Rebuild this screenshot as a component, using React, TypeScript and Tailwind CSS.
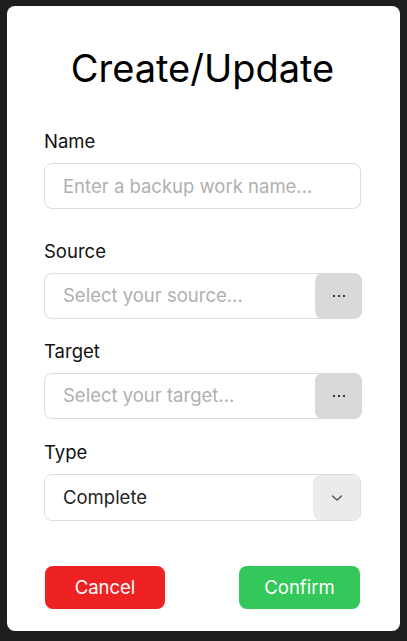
import { useState } from 'react'

function Dots() {
  return (
    <svg width="14" height="4" viewBox="0 0 14 4" fill="#111">
      <circle cx="2" cy="2" r="1.1" />
      <circle cx="7" cy="2" r="1.1" />
      <circle cx="12" cy="2" r="1.1" />
    </svg>
  )
}

function PickerField({ placeholder }: { placeholder: string }) {
  return (
    <div className="flex h-[46px] items-stretch rounded-lg border border-[#dcdcdc] bg-white">
      <input
        className="min-w-0 flex-1 bg-transparent pl-[18px] text-[18.5px] text-[#222] placeholder:text-[#b0b0b0] outline-none"
        placeholder={placeholder}
      />
      <button className="-my-px -mr-[2px] flex w-[47px] items-center justify-center rounded-lg bg-[#d9d9d9]">
        <Dots />
      </button>
    </div>
  )
}

export default function App() {
  const [type, setType] = useState('Complete')

  return (
    <div className="h-[641px] bg-[#1e1e1e] pl-[7px] pt-[6px]" style={{ fontFamily: 'Inter, "Noto Sans", sans-serif' }}>
      <div className="flex h-[625px] w-[393px] flex-col rounded-lg bg-white pl-[37px] pr-[39px] pt-[42px]">
        <h1 className="text-center text-[38px] leading-[40px] text-black">Create/Update</h1>

        {/* Name */}
        <label className="mt-[39px] mb-2 text-[18.5px] leading-7 text-[#111]">Name</label>
        <input
          className="h-[46px] rounded-lg border border-[#dcdcdc] pl-[18px] text-[18.5px] text-[#222] placeholder:text-[#b0b0b0] outline-none"
          placeholder="Enter a backup work name..."
        />

        {/* Source */}
        <label className="mt-[28px] mb-2 text-[18.5px] leading-7 text-[#111]">Source</label>
        <PickerField placeholder="Select your source..." />

        {/* Target */}
        <label className="mt-[18px] mb-2 text-[18.5px] leading-7 text-[#111]">Target</label>
        <PickerField placeholder="Select your target..." />

        {/* Type */}
        <label className="mt-[19px] mb-2 text-[18.5px] leading-7 text-[#111]">Type</label>
        <div className="relative flex h-[47px] items-stretch overflow-hidden rounded-lg border border-[#dcdcdc]">
          <select
            value={type}
            onChange={e => setType(e.target.value)}
            className="min-w-0 flex-1 appearance-none bg-white pl-[18px] text-[18.5px] text-[#222] outline-none"
          >
            <option>Complete</option>
            <option>Incremental</option>
            <option>Differential</option>
          </select>
          <div className="pointer-events-none flex w-[47px] items-center justify-center rounded-lg bg-[#ebebeb]">
            <svg width="14" height="10" viewBox="0 0 14 10" fill="none" stroke="#555" strokeWidth="1.5" strokeLinecap="round" strokeLinejoin="round">
              <path d="M2.5 3l4.5 4 4.5-4" />
            </svg>
          </div>
        </div>

        {/* Actions */}
        <div className="mt-[45px] flex justify-between pl-px pr-px">
          <button className="h-[43px] w-[120px] rounded-lg bg-[#ee2222] text-[18.5px] text-white">Cancel</button>
          <button className="h-[43px] w-[121px] rounded-lg bg-[#34c759] text-[18.5px] text-white">Confirm</button>
        </div>
      </div>
    </div>
  )
}
